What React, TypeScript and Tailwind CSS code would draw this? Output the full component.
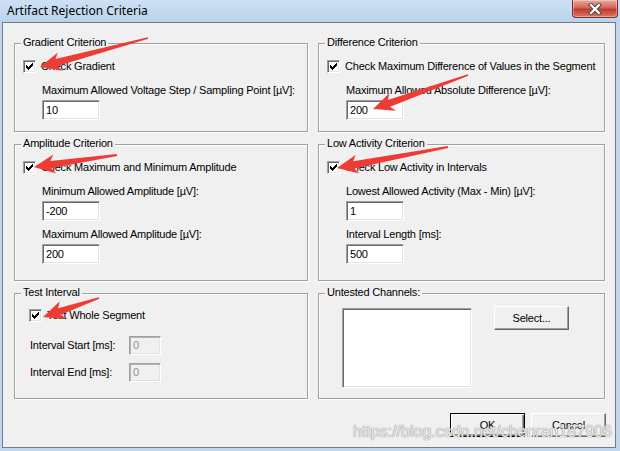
import React from "react";

type Pt = [number, number];

function Arrow({ t, p }: { t: Pt; p: Pt }) {
  const dx = p[0] - t[0];
  const dy = p[1] - t[1];
  const L = Math.hypot(dx, dy);
  const ux = dx / L;
  const uy = dy / L;
  const nx = -uy;
  const ny = ux;
  const h = 20;
  const w = 9.5;
  const s = 3.6;
  const ts = 0.9;
  const bx = p[0] - ux * h;
  const by = p[1] - uy * h;
  const pts: Pt[] = [
    [t[0] + nx * ts, t[1] + ny * ts],
    [bx + ux * 3 + nx * s, by + uy * 3 + ny * s],
    [bx - ux * 1 + nx * w, by - uy * 1 + ny * w],
    p,
    [bx - ux * 1 - nx * w, by - uy * 1 - ny * w],
    [bx + ux * 3 - nx * s, by + uy * 3 - ny * s],
    [t[0] - nx * ts, t[1] - ny * ts],
  ];
  return <polygon points={pts.map((q) => q.join(",")).join(" ")} fill="#ef3b36" />;
}

function CheckMark() {
  const cols: [number, number][] = [
    [1, 3],
    [2, 4],
    [3, 5],
    [4, 4],
    [5, 3],
    [6, 2],
    [7, 1],
  ];
  return (
    <svg width="9" height="9" viewBox="0 0 9 9" shapeRendering="crispEdges">
      {cols.map(([x, y]) => (
        <rect key={x} x={x} y={y} width="1" height="3" fill="#000" />
      ))}
    </svg>
  );
}

function Check({ label }: { label: string }) {
  return (
    <div className="flex items-center gap-[5px] h-[13px]">
      <div className="w-[13px] h-[13px] shrink-0 bg-white border border-t-[#a0a0a0] border-l-[#a0a0a0] border-r-white border-b-white shadow-[inset_1px_1px_0_#696969,inset_-1px_-1px_0_#e3e3e3] flex items-center justify-center">
        <CheckMark />
      </div>
      <span className="whitespace-nowrap">{label}</span>
    </div>
  );
}

function Field({ value, disabled }: { value: string; disabled?: boolean }) {
  if (disabled) {
    return (
      <div className="w-[32px] h-[19px] shrink-0 bg-[#f0f0f0] border border-t-[#a0a0a0] border-l-[#a0a0a0] border-r-white border-b-white shadow-[inset_1px_1px_0_#b4b4b4,inset_-1px_-1px_0_#e3e3e3] pl-[3px] flex items-center text-[#8f8f8f]">
        {value}
      </div>
    );
  }
  return (
    <div className="w-[58px] h-[20px] bg-white border border-t-[#a0a0a0] border-l-[#a0a0a0] border-r-white border-b-white shadow-[inset_1px_1px_0_#696969,inset_-1px_-1px_0_#e3e3e3] pl-[3px] flex items-center">
      {value}
    </div>
  );
}

function Group({ title, children }: { title: string; children?: React.ReactNode }) {
  return (
    <div className="relative border border-[#a0a0a0] shadow-[inset_1px_1px_0_#fff,1px_1px_0_#fff]">
      <span className="absolute left-[6px] top-[-8px] px-[2px] bg-[#f0f0f0] leading-[13px] whitespace-nowrap">
        {title}
      </span>
      {children}
    </div>
  );
}

function Button({ label, primary }: { label: string; primary?: boolean }) {
  const base = primary
    ? "border border-black shadow-[inset_1px_1px_0_#fff,inset_-1px_-1px_0_#696969,inset_-2px_-2px_0_#a0a0a0]"
    : "border border-t-white border-l-white border-r-[#696969] border-b-[#696969] shadow-[inset_-1px_-1px_0_#a0a0a0]";
  return (
    <div className={`w-[75px] h-[24px] bg-[#f0f0f0] flex items-center justify-center ${base}`}>
      {label}
    </div>
  );
}

export default function App() {
  return (
    <div className="relative w-[620px] h-[451px] overflow-hidden bg-[#bfd6ee] font-['Liberation_Sans',Arial,sans-serif] text-[11px] leading-[13px] tracking-[-0.2px] text-black">
      {/* title bar */}
      <div className="h-[22px] flex items-start bg-[linear-gradient(to_bottom,#cde1f5,#b9d2ec)]">
        <div className="pl-[7px] pt-[3px] text-[12px] leading-[16px] tracking-normal font-['Noto_Sans',sans-serif] text-black">
          Artifact Rejection Criteria
        </div>
        <div className="ml-auto mr-[2px] w-[46px] h-[18px] rounded-b-[4px] border border-t-0 border-[#7a3028] bg-[linear-gradient(to_bottom,#e9aa9c_0%,#d2685a_45%,#c03b2c_55%,#d77a66_100%)] shadow-[inset_0_0_0_1px_rgba(255,255,255,0.35)] flex items-center justify-center">
          <svg width="14" height="12" viewBox="0 0 14 12">
            <path d="M3 2 L11 10 M11 2 L3 10" stroke="#4a4a4a" strokeWidth="4.2" strokeLinecap="square" />
            <path d="M3 2 L11 10 M11 2 L3 10" stroke="#ffffff" strokeWidth="2.2" strokeLinecap="square" />
          </svg>
        </div>
      </div>

      {/* client */}
      <div className="ml-[2px] w-[614px] h-[426px] border border-[#6f7b88] bg-[#f0f0f0]">
        <div className="grid grid-cols-[294px_287px] grid-rows-[89px_137px_106px] gap-x-[10px] gap-y-[12px] ml-[11px] mt-[20px]">
          <Group title="Gradient Criterion">
            <div className="pl-[8px] pt-[16px]">
              <Check label="Check Gradient" />
              <div className="pl-[19px] mt-[11px]">
                <div className="whitespace-nowrap">Maximum Allowed Voltage Step / Sampling Point [µV]:</div>
                <div className="mt-[3px]">
                  <Field value="10" />
                </div>
              </div>
            </div>
          </Group>
          <Group title="Difference Criterion">
            <div className="pl-[8px] pt-[16px]">
              <Check label="Check Maximum Difference of Values in the Segment" />
              <div className="pl-[19px] mt-[11px]">
                <div className="whitespace-nowrap">Maximum Allowed Absolute Difference [µV]:</div>
                <div className="mt-[3px]">
                  <Field value="200" />
                </div>
              </div>
            </div>
          </Group>
          <Group title="Amplitude Criterion">
            <div className="pl-[8px] pt-[16px]">
              <Check label="Check Maximum and Minimum Amplitude" />
              <div className="pl-[19px] mt-[11px]">
                <div className="whitespace-nowrap">Minimum Allowed Amplitude [µV]:</div>
                <div className="mt-[3px]">
                  <Field value="-200" />
                </div>
                <div className="whitespace-nowrap mt-[7px]">Maximum Allowed Amplitude [µV]:</div>
                <div className="mt-[3px]">
                  <Field value="200" />
                </div>
              </div>
            </div>
          </Group>
          <Group title="Low Activity Criterion">
            <div className="pl-[8px] pt-[16px]">
              <Check label="Check Low Activity in Intervals" />
              <div className="pl-[19px] mt-[11px]">
                <div className="whitespace-nowrap">Lowest Allowed Activity (Max - Min) [µV]:</div>
                <div className="mt-[3px]">
                  <Field value="1" />
                </div>
                <div className="whitespace-nowrap mt-[7px]">Interval Length [ms]:</div>
                <div className="mt-[3px]">
                  <Field value="500" />
                </div>
              </div>
            </div>
          </Group>
          <Group title="Test Interval">
            <div className="pt-[15px]">
              <div className="pl-[14px]">
                <Check label="Test Whole Segment" />
              </div>
              <div className="pl-[15px] mt-[14px] flex flex-col gap-[8px]">
                <div className="flex items-center">
                  <span className="w-[99px] whitespace-nowrap">Interval Start [ms]:</span>
                  <Field value="0" disabled />
                </div>
                <div className="flex items-center">
                  <span className="w-[99px] whitespace-nowrap">Interval End [ms]:</span>
                  <Field value="0" disabled />
                </div>
              </div>
            </div>
          </Group>
          <Group title="Untested Channels:">
            <div className="pl-[23px] pt-[12px] flex items-start gap-[22px]">
              <div className="mt-[2px] w-[130px] h-[80px] bg-white border border-t-[#a0a0a0] border-l-[#a0a0a0] border-r-white border-b-white shadow-[inset_1px_1px_0_#696969,inset_-1px_-1px_0_#e3e3e3]" />
              <Button label="Select..." />
            </div>
          </Group>
        </div>

        <div className="mt-[14px] flex justify-end gap-[6px] pr-[9px]">
          <Button label="OK" primary />
          <Button label="Cancel" />
        </div>
      </div>

      {/* watermark */}
      <div className="absolute left-[353px] top-[423px] text-[16px] leading-[18px] tracking-normal font-['Liberation_Sans',Arial,sans-serif] text-[rgba(250,250,250,0.85)] [text-shadow:0_0_1px_#8c8c8c,0_0_1px_#8c8c8c] whitespace-nowrap pointer-events-none">
        https://blog.csdn.net/chenran187906
      </div>

      {/* annotation arrows */}
      <svg className="absolute inset-0 pointer-events-none" width="620" height="451" viewBox="0 0 620 451">
        <Arrow t={[148, 38]} p={[40, 67]} />
        <Arrow t={[468, 75]} p={[373, 109]} />
        <Arrow t={[117, 155]} p={[34, 167]} />
        <Arrow t={[448, 147]} p={[337, 168]} />
        <Arrow t={[99, 298]} p={[43, 317]} />
      </svg>
    </div>
  );
}
